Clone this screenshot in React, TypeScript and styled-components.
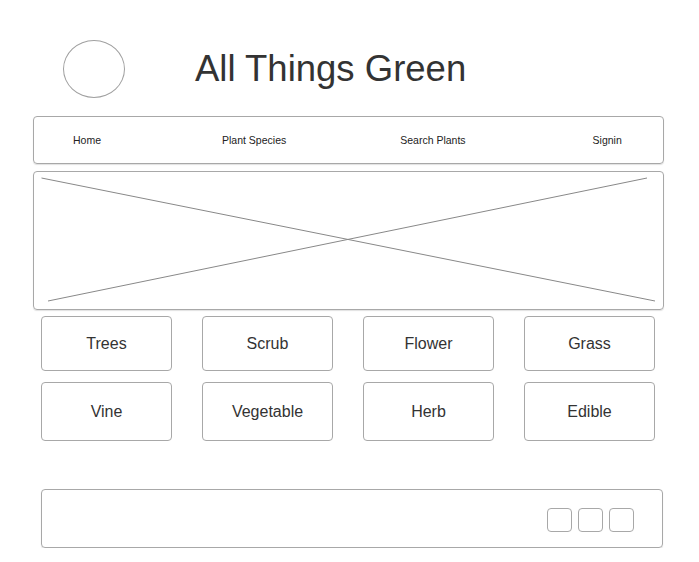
import styled, { createGlobalStyle } from "styled-components";

const GlobalStyle = createGlobalStyle`
  html, body {
    margin: 0;
    padding: 0;
    background: #ffffff;
  }
  body {
    font-family: "Liberation Sans", Arial, sans-serif;
    color: #333333;
  }
`;

const Page = styled.div`
  width: 699px;
  padding-left: 33px;
  box-sizing: border-box;
  display: flex;
  flex-direction: column;
`;

const Header = styled.header`
  margin-top: 40px;
  display: flex;
  align-items: center;
  padding-left: 30px;
`;

const Logo = styled.div`
  width: 62px;
  height: 58px;
  border: 1px solid #a0a0a0;
  border-radius: 50%;
  box-sizing: border-box;
`;

const Title = styled.h1`
  margin: 0 0 0 70px;
  font-size: 36.5px;
  line-height: 1;
  font-weight: normal;
  color: #333333;
`;

const Nav = styled.nav`
  margin-top: 18px;
  width: 631px;
  height: 48px;
  box-sizing: border-box;
  border: 1px solid #a8a8a8;
  border-radius: 4px;
  box-shadow: 0 1px 1px rgba(0, 0, 0, 0.12);
  display: flex;
  align-items: center;
  padding-left: 39px;
`;

const NavLink = styled.a<{ $gap: number }>`
  margin-left: ${(p) => p.$gap}px;
  font-size: 10.5px;
  color: #222222;
  text-decoration: none;
  white-space: nowrap;
`;

const Banner = styled.div`
  margin-top: 7px;
  width: 631px;
  height: 139px;
  box-sizing: border-box;
  border: 1px solid #a8a8a8;
  border-radius: 4px;
  box-shadow: 0 1px 1px rgba(0, 0, 0, 0.12);
  svg {
    display: block;
    width: 100%;
    height: 100%;
  }
`;

const Grid = styled.div`
  margin-top: 6px;
  margin-left: 8px;
  display: grid;
  grid-template-columns: repeat(4, 131px);
  grid-template-rows: 55px 59px;
  column-gap: 30px;
  row-gap: 11px;
`;

const Card = styled.button`
  border: 1px solid #a8a8a8;
  border-radius: 4px;
  background: #ffffff;
  font-family: "Liberation Sans", Arial, sans-serif;
  font-size: 16px;
  color: #333333;
  padding: 0;
  display: flex;
  align-items: center;
  justify-content: center;
`;

const Footer = styled.footer`
  margin-top: 48px;
  margin-left: 8px;
  width: 622px;
  height: 59px;
  box-sizing: border-box;
  border: 1px solid #a8a8a8;
  border-radius: 4px;
  box-shadow: 0 1px 1px rgba(0, 0, 0, 0.12);
  display: flex;
  align-items: center;
  justify-content: flex-end;
  gap: 6px;
  padding: 3px 28px 0 0;
`;

const Square = styled.div`
  width: 25px;
  height: 24px;
  box-sizing: border-box;
  border: 1px solid #a8a8a8;
  border-radius: 4px;
`;

const links = [
  { label: "Home", gap: 0 },
  { label: "Plant Species", gap: 121 },
  { label: "Search Plants", gap: 114 },
  { label: "Signin", gap: 127 },
];

const categories = ["Trees", "Scrub", "Flower", "Grass", "Vine", "Vegetable", "Herb", "Edible"];

export default function App() {
  return (
    <>
      <GlobalStyle />
      <Page>
        <Header>
          <Logo />
          <Title>All Things Green</Title>
        </Header>
        <Nav>
          {links.map((l) => (
            <NavLink key={l.label} $gap={l.gap}>
              {l.label}
            </NavLink>
          ))}
        </Nav>
        <Banner>
          <svg viewBox="0 0 629 137" preserveAspectRatio="none">
            <line x1="7.5" y1="6" x2="621" y2="129" stroke="#888" strokeWidth="1" />
            <line x1="14" y1="129" x2="613" y2="6" stroke="#888" strokeWidth="1" />
          </svg>
        </Banner>
        <Grid>
          {categories.map((c) => (
            <Card key={c}>{c}</Card>
          ))}
        </Grid>
        <Footer>
          <Square />
          <Square />
          <Square />
        </Footer>
      </Page>
    </>
  );
}
